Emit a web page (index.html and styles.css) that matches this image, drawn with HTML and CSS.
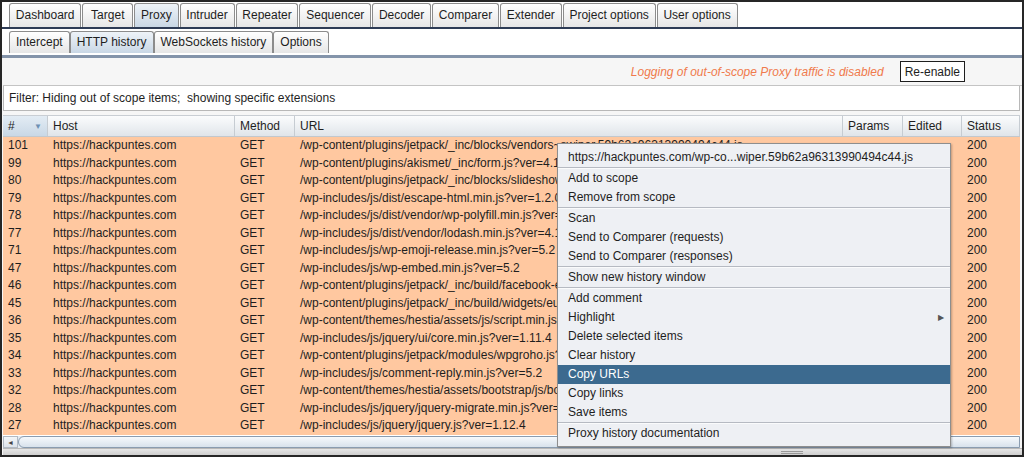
FILE: index.html
```html
<!DOCTYPE html>
<html lang="en">

<head>
  <meta charset="UTF-8">
  <title>Burp Suite - Proxy HTTP history</title>
  <link rel="stylesheet" href="styles.css">
</head>

<body>
  <div class="window">
    <div class="main-tabs">
      <div class="tab">Dashboard</div>
      <div class="tab wide">Target</div>
      <div class="tab active">Proxy</div>
      <div class="tab">Intruder</div>
      <div class="tab">Repeater</div>
      <div class="tab">Sequencer</div>
      <div class="tab">Decoder</div>
      <div class="tab">Comparer</div>
      <div class="tab">Extender</div>
      <div class="tab">Project options</div>
      <div class="tab">User options</div>
    </div>
    <div class="sub-tabs">
      <div class="tab">Intercept</div>
      <div class="tab active">HTTP history</div>
      <div class="tab">WebSockets history</div>
      <div class="tab">Options</div>
    </div>

    <div class="content">
      <div class="logging-bar">
        <span class="logging-msg">Logging of out-of-scope Proxy traffic is disabled</span>
        <button class="btn">Re-enable</button>
      </div>
      <div class="filter-bar">Filter: Hiding out of scope items;&nbsp; showing specific extensions</div>

      <div class="history">
        <div class="row head">
          <div class="cell sorted"># <span class="sort-arrow">▼</span></div>
          <div class="cell">Host</div>
          <div class="cell">Method</div>
          <div class="cell">URL</div>
          <div class="cell">Params</div>
          <div class="cell">Edited</div>
          <div class="cell">Status</div>
        </div>
        <div id="rows"></div>
      </div>

      <div class="hscroll">
        <div class="hscroll-btn">◄</div>
        <div class="hscroll-thumb"></div>
      </div>
      <div class="status-strip"><span class="grip"></span></div>
    </div>

    <div class="context-menu">
      <div class="menu-item">https://hackpuntes.com/wp-co...wiper.59b62a96313990494c44.js</div>
      <div class="menu-sep"></div>
      <div class="menu-item">Add to scope</div>
      <div class="menu-item">Remove from scope</div>
      <div class="menu-sep"></div>
      <div class="menu-item">Scan</div>
      <div class="menu-item">Send to Comparer (requests)</div>
      <div class="menu-item">Send to Comparer (responses)</div>
      <div class="menu-sep"></div>
      <div class="menu-item">Show new history window</div>
      <div class="menu-sep"></div>
      <div class="menu-item">Add comment</div>
      <div class="menu-item submenu">Highlight <span class="sub-arrow">▶</span></div>
      <div class="menu-item">Delete selected items</div>
      <div class="menu-item">Clear history</div>
      <div class="menu-item selected">Copy URLs</div>
      <div class="menu-item">Copy links</div>
      <div class="menu-item">Save items</div>
      <div class="menu-sep"></div>
      <div class="menu-item">Proxy history documentation</div>
    </div>
  </div>

  <script>
    // proxy history rows
    const items = [
      [101, '/wp-content/plugins/jetpack/_inc/blocks/vendors~swiper.59b62a96313990494c44.js'],
      [99, '/wp-content/plugins/akismet/_inc/form.js?ver=4.1.1'],
      [80, '/wp-content/plugins/jetpack/_inc/blocks/slideshow/view.js?minify=false'],
      [79, '/wp-includes/js/dist/escape-html.min.js?ver=1.2.0'],
      [78, '/wp-includes/js/dist/vendor/wp-polyfill.min.js?ver=7.0.0'],
      [77, '/wp-includes/js/dist/vendor/lodash.min.js?ver=4.17.11'],
      [71, '/wp-includes/js/wp-emoji-release.min.js?ver=5.2'],
      [47, '/wp-includes/js/wp-embed.min.js?ver=5.2'],
      [46, '/wp-content/plugins/jetpack/_inc/build/facebook-embed.min.js'],
      [45, '/wp-content/plugins/jetpack/_inc/build/widgets/eu-cookie-law/eu-cookie-law.min.js'],
      [36, '/wp-content/themes/hestia/assets/js/script.min.js?ver=2.4.8'],
      [35, '/wp-includes/js/jquery/ui/core.min.js?ver=1.11.4'],
      [34, '/wp-content/plugins/jetpack/modules/wpgroho.js?ver=5.2'],
      [33, '/wp-includes/js/comment-reply.min.js?ver=5.2'],
      [32, '/wp-content/themes/hestia/assets/bootstrap/js/bootstrap.min.js?ver=1.0.2'],
      [28, '/wp-includes/js/jquery/jquery-migrate.min.js?ver=1.4.1'],
      [27, '/wp-includes/js/jquery/jquery.js?ver=1.12.4']
    ];
    const rows = document.getElementById('rows');

    items.forEach(([num, url]) => {
      const row = document.createElement('div');
      row.classList.add('row');
      row.innerHTML = `
        <div class="cell">${num}</div>
        <div class="cell">https://hackpuntes.com</div>
        <div class="cell">GET</div>
        <div class="cell">${url}</div>
        <div class="cell"></div>
        <div class="cell"></div>
        <div class="cell">200</div>
      `;
      rows.appendChild(row);
    });
  </script>
</body>

</html>
```

FILE: styles.css
```css
* {
  box-sizing: border-box;
  margin: 0;
  padding: 0;
}

body {
  font-family: "Liberation Sans", Arial, sans-serif;
  font-size: 12px;
  color: #1e1e1e;
  background-color: #fff;
}

.window {
  position: relative;
  width: 1024px;
  height: 457px;
  border: 2px solid #262626;
  overflow: hidden;
  display: flex;
  flex-direction: column;
  background-color: #fff;
}

/* tabs */

.main-tabs,
.sub-tabs {
  display: flex;
  align-items: flex-end;
  padding-left: 7px;
}

.main-tabs {
  gap: 1px;
  height: 27px;
  border-bottom: 2px solid #2d3b55;
}

.sub-tabs {
  height: 29px;
  padding-bottom: 2px;
  border-bottom: 3px solid #8494aa;
}

.tab {
  height: 24px;
  line-height: 23px;
  padding: 0 6px;
  border: 1px solid #8c8c8c;
  border-bottom: none;
  border-radius: 3px 3px 0 0;
  background: linear-gradient(#ffffff, #e6e6e6);
  white-space: nowrap;
}

.main-tabs .tab {
  padding: 0 5.8px;
}

.main-tabs .tab.wide {
  padding: 0 7.8px;
}

.sub-tabs .tab {
  height: 22px;
  line-height: 21px;
}

.tab.active {
  background: linear-gradient(#eef3f8, #c9d7e5);
}

/* content */

.content {
  flex: 1;
  display: flex;
  flex-direction: column;
  background-color: #f6f6f6;
  padding: 0 0 0 1px;
}

.logging-bar {
  height: 28px;
  flex-shrink: 0;
  display: flex;
  align-items: center;
  justify-content: flex-end;
  padding-right: 57px;
  gap: 16px;
  border-bottom: 1px solid #c4c4c4;
}

.logging-msg {
  font-style: italic;
  color: #f07a4c;
}

.btn {
  font-family: inherit;
  font-size: 12px;
  height: 21px;
  padding: 0 4px;
  background-color: #fff;
  border: 1px solid #1e1e1e;
  color: #1e1e1e;
}

.filter-bar {
  height: 25px;
  flex-shrink: 0;
  line-height: 25px;
  padding-left: 5px;
  margin-right: 2px;
  background-color: #fff;
  border: 1px solid #b8b8b8;
  border-top: none;
}

.history {
  margin-top: 4px;
  margin-right: 2px;
  background-color: #fff;
  height: 321px;
  flex-shrink: 0;
}

.row {
  display: grid;
  grid-template-columns: 45px 187px 60px 548px 60px 59px 1fr;
  height: 17.5px;
  line-height: 17.5px;
  background-color: #ffc8a0;
}

.row.head {
  height: 22px;
  line-height: 21px;
  background: linear-gradient(#fbfcfd, #e0e5ea);
  border-top: 1px solid #c9ced4;
  border-bottom: 1px solid #c2c8ce;
}

.cell {
  padding-left: 5px;
  white-space: nowrap;
  overflow: hidden;
}

.head .cell {
  border-right: 1px solid #c6ccd2;
  position: relative;
}

.head .cell.sorted {
  background: linear-gradient(#e3ecf4, #c9d8e6);
}

.sort-arrow {
  position: absolute;
  right: 5px;
  top: 0;
  font-size: 8px;
  color: #6e90b4;
}

.hscroll {
  display: flex;
  height: 12px;
  flex-shrink: 0;
  margin-right: 2px;
  background-color: #e4e9ef;
}

.hscroll-btn {
  width: 15px;
  font-size: 7px;
  line-height: 12px;
  text-align: center;
  color: #444;
  background: linear-gradient(#f4f6f8, #dde3ea);
  border: 1px solid #b2bac4;
}

.hscroll-thumb {
  flex: 1;
  border: 1px solid #8a9cb0;
  border-radius: 6px 0 0 6px;
  background: linear-gradient(#f6f9fc, #d8e2ec);
}

.status-strip {
  flex: 1;
  position: relative;
  background: linear-gradient(#e6e6e6, #cfcfcf);
  border-top: 1px solid #b8b8b8;
}

.grip {
  position: absolute;
  left: 778px;
  top: 2px;
  width: 22px;
  height: 3px;
  border-top: 1px solid #9a9a9a;
  border-bottom: 1px solid #9a9a9a;
}

/* context menu */

.context-menu {
  position: absolute;
  left: 555px;
  top: 141px;
  width: 394px;
  padding: 4px 0 3px;
  background-color: #eef0f4;
  border: 1px solid #8e8e8e;
  box-shadow: 1px 1px 2px rgba(0, 0, 0, 0.25);
}

.menu-item {
  height: 19px;
  line-height: 19px;
  padding-left: 10px;
  position: relative;
  white-space: nowrap;
}

.menu-item.selected {
  background-color: #3c6a8f;
  color: #fff;
}

.sub-arrow {
  position: absolute;
  right: 6px;
  top: 0;
  font-size: 8px;
  color: #555;
}

.menu-sep {
  height: 2px;
  border-top: 1px solid #b6bac2;
  background-color: #fafbfc;
}
```
